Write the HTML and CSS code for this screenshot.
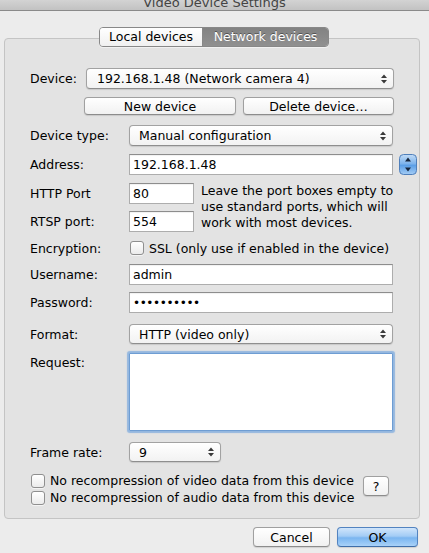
FILE: index.html
```html
<!DOCTYPE html>
<html>
<head>
<meta charset="utf-8">
<link rel="stylesheet" href="styles.css">
</head>
<body>
<div class="titlebar"><span>Video Device Settings</span></div>
<div class="main">
  <div class="tabs">
    <div class="seg">
      <div class="tab tab-local">Local devices</div>
      <div class="tab tab-net">Network devices</div>
    </div>
  </div>
  <div class="group">
    <div class="row">
      <div class="lbl lbl-short">Device:</div>
      <div class="popup popup-device"><span>192.168.1.48 (Network camera 4)</span><svg class="arr" width="6" height="10" viewBox="0 0 6 10"><path d="M0 4 L3 0.5 L6 4Z M0 6 L3 9.5 L6 6Z"/></svg></div>
    </div>
    <div class="row row-btns">
      <div class="btn btn-new">New device</div>
      <div class="btn btn-del">Delete device…</div>
    </div>
    <div class="row row-type">
      <div class="lbl">Device type:</div>
      <div class="popup popup-wide"><span>Manual configuration</span><svg class="arr" width="6" height="10" viewBox="0 0 6 10"><path d="M0 4 L3 0.5 L6 4Z M0 6 L3 9.5 L6 6Z"/></svg></div>
    </div>
    <div class="row row-addr">
      <div class="lbl">Address:</div>
      <div class="field field-wide">192.168.1.48</div>
      <svg class="stepper" width="18" height="21" viewBox="0 0 18 21">
        <defs>
          <linearGradient id="sg" x1="0" y1="0" x2="0" y2="1">
            <stop offset="0" stop-color="#c3dcf6"/>
            <stop offset="0.45" stop-color="#7fb4ec"/>
            <stop offset="0.55" stop-color="#5c9fe6"/>
            <stop offset="1" stop-color="#a5cdf5"/>
          </linearGradient>
        </defs>
        <rect x="0.5" y="0.5" width="17" height="20" rx="4" fill="url(#sg)" stroke="#4f7fba"/>
        <path d="M6 7.5 L9 3.5 L12 7.5Z M6 13.5 L9 17.5 L12 13.5Z" fill="#16263d"/>
      </svg>
    </div>
    <div class="row row-ports">
      <div class="ports">
        <div class="row">
          <div class="lbl">HTTP Port</div>
          <div class="field field-port">80</div>
        </div>
        <div class="row row-rtsp">
          <div class="lbl">RTSP port:</div>
          <div class="field field-port">554</div>
        </div>
      </div>
      <div class="help">Leave the port boxes empty to<br>use standard ports, which will<br>work with most devices.</div>
    </div>
    <div class="row row-enc">
      <div class="lbl">Encryption:</div>
      <div class="check check-enc"></div>
      <div class="ctext">SSL (only use if enabled in the device)</div>
    </div>
    <div class="row row-user">
      <div class="lbl">Username:</div>
      <div class="field field-wide">admin</div>
    </div>
    <div class="row row-pass">
      <div class="lbl">Password:</div>
      <div class="field field-wide dots">••••••••••</div>
    </div>
    <div class="row row-format">
      <div class="lbl">Format:</div>
      <div class="popup popup-wide popup-20"><span>HTTP (video only)</span><svg class="arr" width="6" height="10" viewBox="0 0 6 10"><path d="M0 4 L3 0.5 L6 4Z M0 6 L3 9.5 L6 6Z"/></svg></div>
    </div>
    <div class="row row-req">
      <div class="lbl lbl-top">Request:</div>
      <div class="textarea"></div>
    </div>
    <div class="row row-rate">
      <div class="lbl">Frame rate:</div>
      <div class="popup popup-rate popup-20"><span>9</span><svg class="arr" width="6" height="10" viewBox="0 0 6 10"><path d="M0 4 L3 0.5 L6 4Z M0 6 L3 9.5 L6 6Z"/></svg></div>
    </div>
    <div class="row row-checks">
      <div class="checks">
        <div class="crow"><div class="check"></div><div class="ctext">No recompression of video data from this device</div></div>
        <div class="crow"><div class="check"></div><div class="ctext">No recompression of audio data from this device</div></div>
      </div>
      <div class="btn btn-help">?</div>
    </div>
  </div>
  <div class="footer">
    <div class="btn btn-cancel">Cancel</div>
    <div class="btn btn-ok">OK</div>
  </div>
</div>
</body>
</html>
```
FILE: styles.css
```css
* { box-sizing: border-box; }
html, body { margin: 0; padding: 0; }
body {
  width: 429px;
  height: 553px;
  overflow: hidden;
  background: #ececec;
  font-family: "DejaVu Sans", "Liberation Sans", sans-serif;
  font-size: 12.5px;
  color: #000;
}
.titlebar {
  height: 11px;
  overflow: hidden;
  background: linear-gradient(#d3d3d3, #c2c2c2);
  border-bottom: 1px solid #8a8a8a;
  text-align: center;
  color: #444;
  font-size: 13px;
}
.titlebar span { display: block; line-height: 14px; margin-top: -4px; }

.main { padding: 16px 10px 0 4px; }

.tabs { position: relative; z-index: 1; padding-left: 95px; height: 20px; }
.seg {
  display: inline-flex;
  height: 20px;
  border: 1px solid #888;
  border-radius: 4px;
  overflow: hidden;
  box-shadow: 0 1px 0 rgba(255,255,255,0.5);
}
.tab { line-height: 18px; text-align: center; font-size: 12.5px; }
.tab-local { width: 103px; background: linear-gradient(#ffffff, #f0f0f0); color: #000; border-right: 1px solid #888; }
.tab-net { width: 125px; background: linear-gradient(#828282, #909090); color: #fff; text-shadow: 0 -1px 0 rgba(0,0,0,0.4); }

.group {
  margin-top: -9px;
  width: 416px;
  border: 1px solid #c4c4c4;
  border-radius: 4px;
  background: #e3e3e3;
  padding: 29px 25px 12px 25px;
}
.row { display: flex; align-items: center; }
.lbl { width: 99px; flex: none; white-space: nowrap; }
.lbl-short { width: 56px; }
.lbl-top { align-self: flex-start; line-height: 20px; }

.popup {
  height: 21px;
  flex: none;
  display: flex;
  align-items: center;
  padding-left: 9px;
  border: 1px solid #a2a2a2;
  border-bottom-color: #8e8e8e;
  border-radius: 4px;
  background: linear-gradient(#ffffff, #f2f2f2);
  box-shadow: 0 1px 1px rgba(0,0,0,0.12);
  white-space: nowrap;
}
.popup-20 { height: 20px; }
.popup .arr { margin-left: auto; margin-right: 6px; fill: #3a3a3a; flex: none; }
.popup-device { width: 308px; padding-left: 10px; }
.popup-wide { width: 264px; }
.popup-rate { width: 92px; }

.row-btns { margin-top: 8px; padding-left: 54px; gap: 7px; }
.btn {
  height: 18px;
  flex: none;
  display: flex;
  align-items: center;
  justify-content: center;
  border: 1px solid #a0a0a0;
  border-bottom-color: #8c8c8c;
  border-radius: 4px;
  background: linear-gradient(#ffffff, #f1f1f1);
  box-shadow: 0 1px 1px rgba(0,0,0,0.12);
  white-space: nowrap;
}
.btn-new { width: 152px; }
.btn-del { width: 151px; }

.row-type { margin-top: 10px; }
.row-addr { margin-top: 8px; }
.field {
  height: 21px;
  flex: none;
  display: flex;
  align-items: center;
  padding: 0 3px;
  background: #fff;
  border: 1px solid #adadad;
  border-top-color: #8d8d8d;
  box-shadow: inset 0 1px 1px rgba(0,0,0,0.06);
  white-space: nowrap;
}
.field-wide { width: 264px; }
.field-port { width: 65px; }
.stepper { flex: none; margin-left: 6px; margin-top: -1px; }

.row-ports { margin-top: 8px; align-items: flex-start; }
.row-rtsp { margin-top: 7px; }
.help { margin-left: 7px; line-height: 16px; margin-top: 0px; white-space: nowrap; }

.row-enc { margin-top: 6px; height: 20px; }
.check {
  width: 14px;
  height: 14px;
  flex: none;
  border: 1px solid #8f8f8f;
  border-radius: 3px;
  background: linear-gradient(#ffffff, #ebebeb);
  box-shadow: 0 1px 0 rgba(255,255,255,0.6);
}
.check-enc { margin-left: 1px; }
.ctext { margin-left: 5px; white-space: nowrap; }

.row-user { margin-top: 6px; }
.row-pass { margin-top: 7px; }
.dots { letter-spacing: -0.4px; font-size: 12px; }
.row-format { margin-top: 11px; }
.row-req { margin-top: 9px; align-items: flex-start; }
.textarea {
  width: 264px;
  height: 78px;
  flex: none;
  background: #fff;
  border: 1px solid #6e9dd3;
  border-radius: 1px;
  box-shadow: 0 0 1px 2px rgba(122,168,222,0.75);
}
.row-rate { margin-top: 11px; }

.row-checks { margin-top: 10px; align-items: flex-start; }
.checks { width: 333px; flex: none; }
.crow { display: flex; align-items: center; height: 17px; padding-left: 1px; }
.btn-help { width: 26px; height: 20px; margin-top: 4px; }

.footer { display: flex; justify-content: flex-end; gap: 7px; margin-top: 8px; padding-right: 1px; }
.btn-cancel { width: 77px; height: 20px; }
.btn-ok {
  width: 81px;
  height: 20px;
  border-color: #5283c0;
  border-bottom-color: #3f6ea8;
  background: linear-gradient(#d0e5fb 0%, #a3ccf5 45%, #7ab5f0 55%, #a9d2f8 100%);
}
```
